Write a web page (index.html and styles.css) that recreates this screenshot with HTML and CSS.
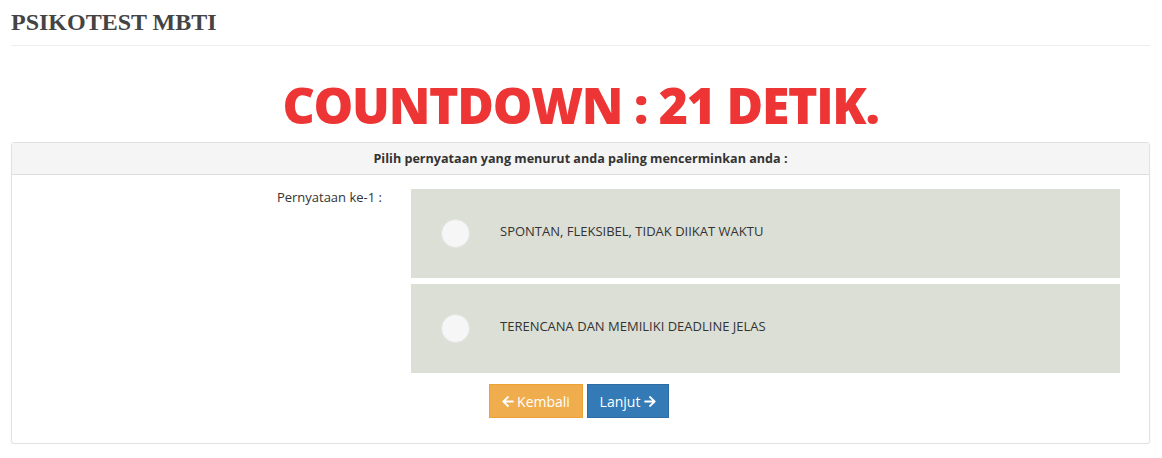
FILE: index.html
```html
<!DOCTYPE html>
<html>
<head>
<meta charset="utf-8">
<link rel="stylesheet" href="styles.css">
</head>
<body>
<div class="page">
  <h1 class="title">PSIKOTEST MBTI</h1>
  <div class="countdown">COUNTDOWN : 21 DETIK.</div>
  <div class="panel">
    <div class="panel-heading">Pilih pernyataan yang menurut anda paling mencerminkan anda :</div>
    <div class="panel-body">
      <div class="row">
        <div class="label">Pernyataan ke-1 :</div>
        <div class="options">
          <div class="option"><span class="radio"></span><span class="opt-text">SPONTAN, FLEKSIBEL, TIDAK DIIKAT WAKTU</span></div>
          <div class="option"><span class="radio"></span><span class="opt-text">TERENCANA DAN MEMILIKI DEADLINE JELAS</span></div>
        </div>
      </div>
      <div class="actions">
        <button class="btn btn-warning"><svg class="ico" viewBox="0 0 448 512"><path d="M257.5 445.1l-22.2 22.2c-9.4 9.4-24.6 9.4-33.9 0L7 273c-9.4-9.4-9.4-24.6 0-33.9L201.4 44.7c9.4-9.4 24.6-9.4 33.9 0l22.2 22.2c9.5 9.5 9.3 25-.4 34.3L136.6 216H424c13.3 0 24 10.7 24 24v32c0 13.3-10.7 24-24 24H136.6l120.5 114.8c9.8 9.3 10 24.8.4 34.3z" fill="#fff"/></svg>Kembali</button>
        <button class="btn btn-primary">Lanjut<svg class="ico ico-r" viewBox="0 0 448 512"><path d="M190.5 66.9l22.2-22.2c9.4-9.4 24.6-9.4 33.9 0L441 239c9.4 9.4 9.4 24.6 0 33.9L246.6 467.3c-9.4 9.4-24.6 9.4-33.9 0l-22.2-22.2c-9.5-9.5-9.3-25 .4-34.3L311.4 296H24c-13.3 0-24-10.7-24-24v-32c0-13.3 10.7-24 24-24h287.4L190.9 101.2c-9.8-9.3-10-24.8-.4-34.3z" fill="#fff"/></svg></button>
      </div>
    </div>
  </div>
</div>
</body>
</html>
```

FILE: styles.css
```css
* { box-sizing: border-box; }
body { margin: 0; background: #fff; font-family: "Open Sans", sans-serif; color: #333; }
.page { padding: 0 12px 0 11px; }
.title {
  margin: 0;
  padding: 9px 0 10px;
  font-family: "Liberation Serif", serif;
  font-weight: bold;
  font-size: 24px;
  line-height: 26px;
  color: #444;
  border-bottom: 1px solid #eee;
}
.countdown {
  text-align: center;
  font-family: "Open Sans", sans-serif;
  font-weight: 800;
  font-size: 50px;
  letter-spacing: -1.3px;
  line-height: 60px;
  color: #ee3535;
  margin-top: 29px;
  height: 67px;
}
.panel {
  border: 1px solid #e2e2e2;
  border-radius: 3px;
  box-shadow: 0 1px 2px rgba(0,0,0,0.06);
  background: #fff;
}
.panel-heading {
  background: #f5f5f5;
  border-bottom: 1px solid #ddd;
  text-align: center;
  font-size: 12.6px;
  font-weight: bold;
  height: 32px;
  line-height: 31px;
  color: #333;
}
.panel-body { padding: 14px 0 25px; }
.row { display: flex; }
.label {
  width: 370px;
  text-align: right;
  font-size: 13px;
  line-height: 17px;
  margin-right: 29px;
  color: #333;
}
.options { width: 709px; display: flex; flex-direction: column; gap: 6px; }
.option {
  background: #dcdfd5;
  height: 89px;
  display: flex;
  align-items: center;
  padding-left: 30px;
}
.radio {
  width: 29px;
  height: 29px;
  border-radius: 50%;
  background: #f6f6f6;
  border: 1px solid #e4e4e4;
  flex: none;
}
.opt-text {
  margin-left: 30px;
  font-size: 13px;
  line-height: 17px;
  padding-bottom: 4px;
  color: #333;
}
.actions { display: flex; gap: 4px; padding-left: 477px; margin-top: 11px; }
.btn {
  font-family: "Open Sans", sans-serif;
  font-size: 14px;
  color: #fff;
  height: 34px;
  border: 1px solid transparent;
  border-radius: 0;
  display: flex;
  align-items: center;
  justify-content: center;
  padding: 0;
  cursor: pointer;
}
.btn-warning { background: #f0ad4e; border-color: #eea236; width: 94px; }
.btn-primary { background: #337ab7; border-color: #2e6da4; width: 82px; }
.ico { width: 12px; height: 13px; margin-right: 3px; }
.ico-r { margin-right: 0; margin-left: 4px; }
```
